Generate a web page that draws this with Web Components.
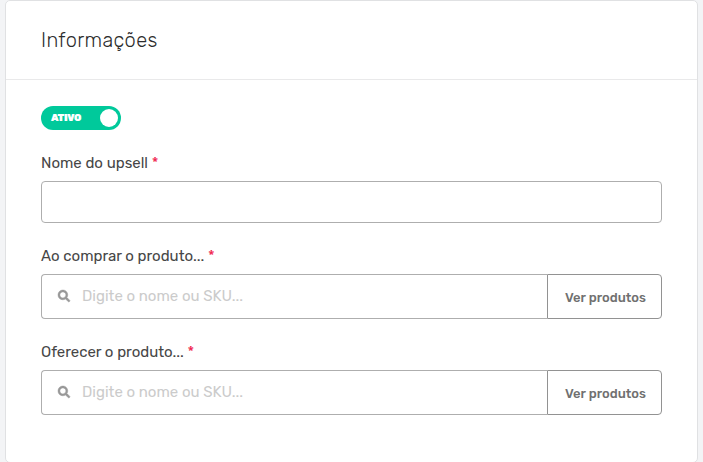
<!DOCTYPE html>
<html lang="pt-BR">
<head>
<meta charset="utf-8">
<title>Upsell</title>
<style>
  html, body {
    margin: 0;
    height: 100%;
    overflow: hidden;
  }
  body {
    background: #f3f4f6;
    color: #464646;
    font-family: Rubik, Roboto, sans-serif;
    font-size: 15px;
  }
</style>
</head>
<body>
<upsell-card>
  <span slot="title">Informações</span>
  <toggle-switch>ATIVO</toggle-switch>
  <form-field label="Nome do upsell">
    <text-box></text-box>
  </form-field>
  <form-field label="Ao comprar o produto...">
    <product-search button="Ver produtos">Digite o nome ou SKU...</product-search>
  </form-field>
  <form-field label="Oferecer o produto...">
    <product-search button="Ver produtos">Digite o nome ou SKU...</product-search>
  </form-field>
</upsell-card>

<script>
class UpsellCard extends HTMLElement {
  constructor() {
    super();
    this.attachShadow({ mode: "open" });
    this.shadowRoot.innerHTML = `
      <style>
        :host {
          display: block;
          box-sizing: border-box;
          height: 463px;
          margin: 0 5px;
          background: #fff;
          border: 1px solid #e0e1e3;
          border-radius: 5px;
        }
        header {
          box-sizing: border-box;
          height: 79px;
          padding: 27px 35px 0;
          border-bottom: 1px solid #e9e9ea;
          color: #2c2c2c;
          font-size: 20px;
          font-weight: 300;
          line-height: 24px;
          letter-spacing: 0.36px;
        }
        .body {
          padding: 26px 35px 0;
        }
      </style>
      <header><slot name="title"></slot></header>
      <div class="body"><slot></slot></div>
    `;
  }
}

class ToggleSwitch extends HTMLElement {
  constructor() {
    super();
    this.attachShadow({ mode: "open" });
    this.shadowRoot.innerHTML = `
      <style>
        :host {
          display: flex;
          align-items: center;
          justify-content: space-between;
          box-sizing: border-box;
          width: 80px;
          height: 24px;
          padding: 0 3px 0 10px;
          margin-bottom: 24px;
          border-radius: 12px;
          background: #00c99b;
          color: #fff;
          font-size: 10px;
          font-weight: 900;
          line-height: 24px;
          letter-spacing: -0.35px;
          cursor: pointer;
        }
        .knob {
          width: 18px;
          height: 18px;
          border-radius: 50%;
          background: #fff;
        }
      </style>
      <slot></slot>
      <span class="knob"></span>
    `;
  }
}

class FormField extends HTMLElement {
  constructor() {
    super();
    this.attachShadow({ mode: "open" });
  }

  connectedCallback() {
    this.shadowRoot.innerHTML = `
      <style>
        :host {
          display: block;
          margin-bottom: 24px;
        }
        .label {
          height: 27px;
          line-height: 18px;
        }
        .required {
          color: #f0264f;
        }
      </style>
      <div class="label">${this.getAttribute("label")} <span class="required">*</span></div>
      <slot></slot>
    `;
  }
}

class TextBox extends HTMLElement {
  constructor() {
    super();
    this.attachShadow({ mode: "open" });
    this.shadowRoot.innerHTML = `
      <style>
        :host {
          display: block;
        }
        input {
          display: block;
          box-sizing: border-box;
          width: 100%;
          height: 42px;
          padding: 0 16px;
          border: 1px solid #aeaeae;
          border-radius: 4px;
          background: #fff;
          font: inherit;
          outline: none;
        }
      </style>
      <input type="text">
    `;
  }
}

class ProductSearch extends HTMLElement {
  constructor() {
    super();
    this.attachShadow({ mode: "open" });
  }

  connectedCallback() {
    this.shadowRoot.innerHTML = `
      <style>
        :host {
          display: flex;
          height: 45px;
        }
        .search {
          flex: 1;
          display: flex;
          box-sizing: border-box;
          padding: 0 16px;
          border: 1px solid #aeaeae;
          border-right: 0;
          border-radius: 4px 0 0 4px;
          color: #cbcbcb;
          line-height: 43px;
        }
        svg {
          flex: none;
          width: 12px;
          height: 12px;
          margin: 15px 12px 0 0;
          overflow: visible;
          fill: #989898;
          stroke: #989898;
          stroke-width: 20;
        }
        button {
          box-sizing: border-box;
          width: 115px;
          padding: 2px 0 0 2px;
          border: 1px solid #929292;
          border-radius: 0 4px 4px 0;
          background: #fff;
          color: #707070;
          font: 500 13px Rubik, Roboto, sans-serif;
          cursor: pointer;
        }
      </style>
      <div class="search">
        <svg viewBox="0 0 512 512"><path d="M505 442.700L405.300 343c-4.500-4.500-10.600-7-17-7H372c27.600-35.300 44-79.700 44-128C416 93.100 322.900 0 208 0S0 93.100 0 208s93.100 208 208 208c48.300 0 92.700-16.400 128-44v16.300c0 6.400 2.500 12.500 7 17l99.700 99.700c9.400 9.400 24.600 9.400 33.900 0l28.300-28.300c9.400-9.400 9.400-24.600.1-34zM208 336c-70.700 0-128-57.200-128-128 0-70.700 57.200-128 128-128 70.700 0 128 57.200 128 128 0 70.700-57.200 128-128 128z"/></svg>
        <span><slot></slot></span>
      </div>
      <button type="button">${this.getAttribute("button")}</button>
    `;
  }
}

customElements.define("upsell-card", UpsellCard);
customElements.define("toggle-switch", ToggleSwitch);
customElements.define("form-field", FormField);
customElements.define("text-box", TextBox);
customElements.define("product-search", ProductSearch);
</script>
</body>
</html>
